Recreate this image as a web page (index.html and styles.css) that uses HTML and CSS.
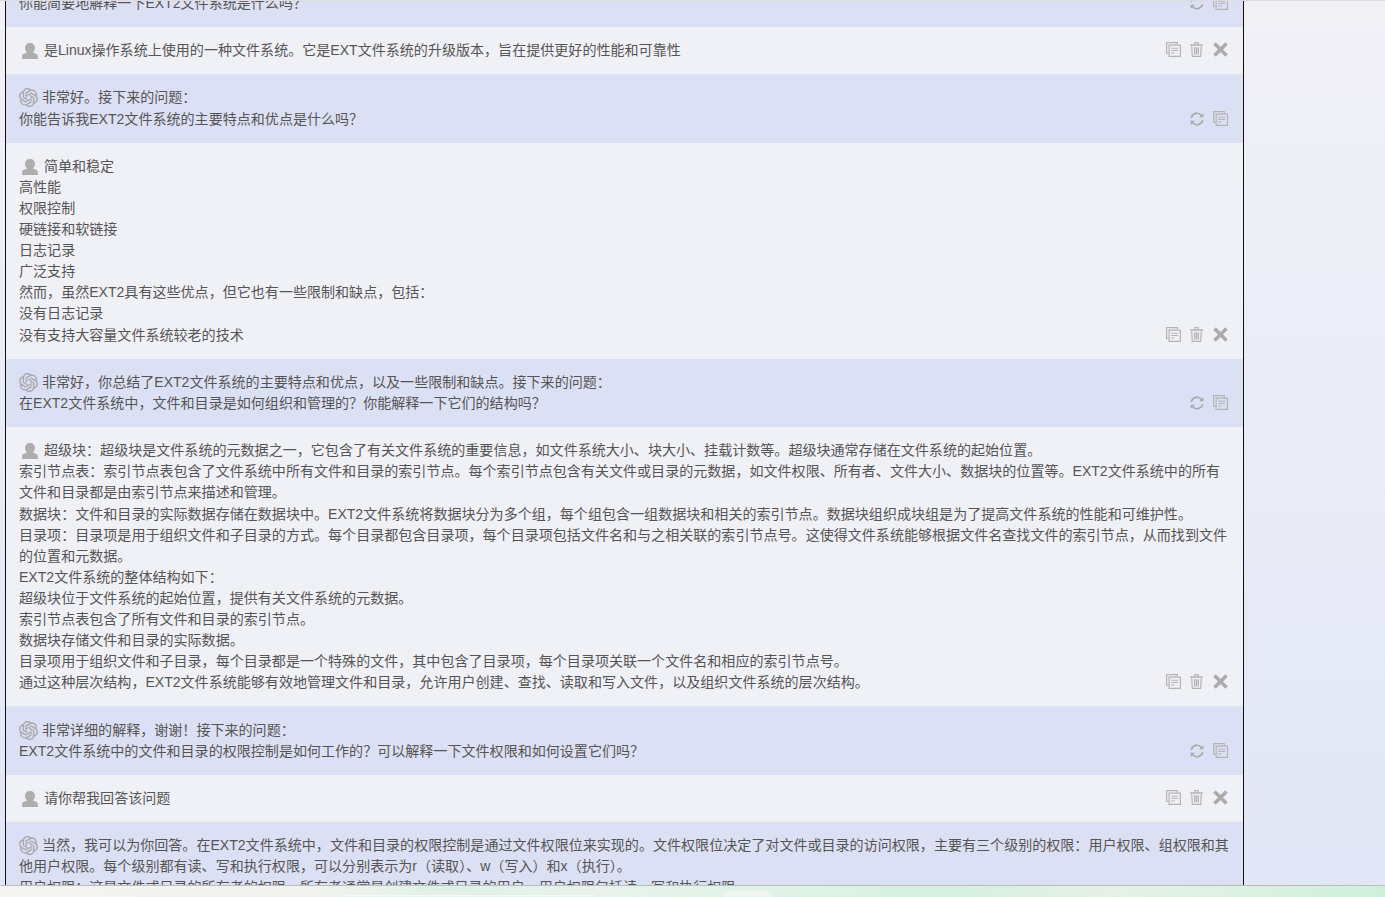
FILE: index.html
```html
<!DOCTYPE html>
<html lang="zh">
<head>
<meta charset="utf-8">
<title>Chat</title>
<link rel="stylesheet" href="styles.css">
</head>
<body>
<svg class="defs" width="0" height="0" aria-hidden="true">
  <symbol id="i-user" viewBox="0 0 16 16"><path d="M8 0C4.900 0 3 2.100 3 5c0 1.900.8 3.500 2 4.400L1.500 11C.6 11.400.4 12 .2 13L0 16.500h16L15.800 13c-.2-1-.4-1.600-1.300-2L11 9.400c1.200-.9 2-2.500 2-4.400 0-2.900-1.900-5-5-5z"/></symbol>
  <symbol id="i-gpt" viewBox="0 0 24 24"><path d="M22.2819 9.8211a5.9847 5.9847 0 0 0-.5157-4.9108 6.0462 6.0462 0 0 0-6.5098-2.9A6.0651 6.0651 0 0 0 4.9807 4.1818a5.9847 5.9847 0 0 0-3.9977 2.9 6.0462 6.0462 0 0 0 .7427 7.0966 5.98 5.98 0 0 0 .511 4.9107 6.051 6.051 0 0 0 6.5146 2.9001A5.9847 5.9847 0 0 0 13.2599 24a6.0557 6.0557 0 0 0 5.7718-4.2058 5.9894 5.9894 0 0 0 3.9977-2.9001 6.0557 6.0557 0 0 0-.7475-7.0729zm-9.022 12.6081a4.4755 4.4755 0 0 1-2.8764-1.0408l.1419-.0804 4.7783-2.7582a.7948.7948 0 0 0 .3927-.6813v-6.7369l2.02 1.1686a.071.071 0 0 1 .038.052v5.5826a4.504 4.504 0 0 1-4.4945 4.4944zm-9.6607-4.1254a4.4708 4.4708 0 0 1-.5346-3.0137l.142.0852 4.783 2.7582a.7712.7712 0 0 0 .7806 0l5.8428-3.3685v2.3324a.0804.0804 0 0 1-.0332.0615L9.74 19.9502a4.4992 4.4992 0 0 1-6.1408-1.6464zM2.3408 7.8956a4.485 4.485 0 0 1 2.3655-1.9728V11.6a.7664.7664 0 0 0 .3879.6765l5.8144 3.3543-2.0201 1.1685a.0757.0757 0 0 1-.071 0l-4.8303-2.7865A4.504 4.504 0 0 1 2.3408 7.872zm16.5963 3.8558L13.1038 8.364 15.1192 7.2a.0757.0757 0 0 1 .071 0l4.8303 2.7913a4.4944 4.4944 0 0 1-.6765 8.1042v-5.6772a.79.79 0 0 0-.407-.667zm2.0107-3.0231l-.142-.0852-4.7735-2.7818a.7759.7759 0 0 0-.7854 0L9.409 9.2297V6.8974a.0662.0662 0 0 1 .0284-.0615l4.8303-2.7866a4.4992 4.4992 0 0 1 6.6802 4.66zM8.3065 12.863l-2.02-1.1638a.0804.0804 0 0 1-.038-.0567V6.0742a4.4992 4.4992 0 0 1 7.3757-3.4537l-.142.0805L8.704 5.459a.7948.7948 0 0 0-.3927.6813zm1.0976-2.3654l2.602-1.4998 2.6069 1.4998v2.9994l-2.5974 1.4997-2.6067-1.4997Z"/></symbol>
  <symbol id="i-copy" viewBox="0 0 15 15"><path class="ol" d="M2.500 11.500H.6V.6h10.800v1.900"/><path class="ol" d="M3.100 3.100h11.300v11.300H3.100z"/><path class="ln" d="M5.200 6.200h7M5.200 8.500h7M5.200 11h3.500"/></symbol>
  <symbol id="i-trash" viewBox="0 0 14 16"><path d="M0 2.400h14v1.500H0zM4.500 0h5v2.400H8.400V1.200H5.600v1.200H4.500z"/><path d="M1.200 4.500h1.300L3.100 14.800h7.800l.6-10.300h1.300l-.7 11.500H1.900zM4.300 5.500h1.400v8H4.300zM6.300 5.500h1.400v8H6.300zM8.300 5.500h1.400v8H8.300z"/></symbol>
  <symbol id="i-x" viewBox="0 0 15 15"><path class="xs" d="M1.500 1.500l12 12M13.500 1.500l-12 12"/></symbol>
  <symbol id="i-redo" viewBox="0 0 14 14"><path class="ol2" d="M1.300 5.800A5.800 5.800 0 0 1 11.500 3.400M12.700 8.200A5.800 5.800 0 0 1 2.500 10.600"/><path d="M13.400 1v4.200H9.200zM.6 13V8.800h4.200z"/></symbol>
</svg>

<main class="stage">
  <section class="chat">
    <div class="thread">

      <article class="msg bot">
        <p><svg class="ic-gpt"><use href="#i-gpt"/></svg> 是的。接下来的问题&#65306;</p>
        <p>你能简要地解释一下EXT2文件系统是什么吗&#65311;</p>
        <div class="acts"><svg class="a-redo"><use href="#i-redo"/></svg><svg class="a-copy"><use href="#i-copy"/></svg></div>
      </article>

      <article class="msg me">
        <p><svg class="ic-user"><use href="#i-user"/></svg> 是Linux操作系统上使用的一种文件系统。它是EXT文件系统的升级版本&#65292;旨在提供更好的性能和可靠性</p>
        <div class="acts"><svg class="a-copy"><use href="#i-copy"/></svg><svg class="a-trash"><use href="#i-trash"/></svg><svg class="a-x"><use href="#i-x"/></svg></div>
      </article>

      <article class="msg bot">
        <p><svg class="ic-gpt"><use href="#i-gpt"/></svg> 非常好。接下来的问题&#65306;</p>
        <p>你能告诉我EXT2文件系统的主要特点和优点是什么吗&#65311;</p>
        <div class="acts"><svg class="a-redo"><use href="#i-redo"/></svg><svg class="a-copy"><use href="#i-copy"/></svg></div>
      </article>

      <article class="msg me">
        <p><svg class="ic-user"><use href="#i-user"/></svg> 简单和稳定</p>
        <p>高性能</p>
        <p>权限控制</p>
        <p>硬链接和软链接</p>
        <p>日志记录</p>
        <p>广泛支持</p>
        <p>然而&#65292;虽然EXT2具有这些优点&#65292;但它也有一些限制和缺点&#65292;包括&#65306;</p>
        <p>没有日志记录</p>
        <p>没有支持大容量文件系统较老的技术</p>
        <div class="acts"><svg class="a-copy"><use href="#i-copy"/></svg><svg class="a-trash"><use href="#i-trash"/></svg><svg class="a-x"><use href="#i-x"/></svg></div>
      </article>

      <article class="msg bot">
        <p><svg class="ic-gpt"><use href="#i-gpt"/></svg> 非常好&#65292;你总结了EXT2文件系统的主要特点和优点&#65292;以及一些限制和缺点。接下来的问题&#65306;</p>
        <p>在EXT2文件系统中&#65292;文件和目录是如何组织和管理的&#65311;你能解释一下它们的结构吗&#65311;</p>
        <div class="acts"><svg class="a-redo"><use href="#i-redo"/></svg><svg class="a-copy"><use href="#i-copy"/></svg></div>
      </article>

      <article class="msg me">
        <p><svg class="ic-user"><use href="#i-user"/></svg> 超级块&#65306;超级块是文件系统的元数据之一&#65292;它包含了有关文件系统的重要信息&#65292;如文件系统大小、块大小、挂载计数等。超级块通常存储在文件系统的起始位置。</p>
        <p>索引节点表&#65306;索引节点表包含了文件系统中所有文件和目录的索引节点。每个索引节点包含有关文件或目录的元数据&#65292;如文件权限、所有者、文件大小、数据块的位置等。EXT2文件系统中的所有文件和目录都是由索引节点来描述和管理。</p>
        <p>数据块&#65306;文件和目录的实际数据存储在数据块中。EXT2文件系统将数据块分为多个组&#65292;每个组包含一组数据块和相关的索引节点。数据块组织成块组是为了提高文件系统的性能和可维护性。</p>
        <p>目录项&#65306;目录项是用于组织文件和子目录的方式。每个目录都包含目录项&#65292;每个目录项包括文件名和与之相关联的索引节点号。这使得文件系统能够根据文件名查找文件的索引节点&#65292;从而找到文件的位置和元数据。</p>
        <p>EXT2文件系统的整体结构如下&#65306;</p>
        <p>超级块位于文件系统的起始位置&#65292;提供有关文件系统的元数据。</p>
        <p>索引节点表包含了所有文件和目录的索引节点。</p>
        <p>数据块存储文件和目录的实际数据。</p>
        <p>目录项用于组织文件和子目录&#65292;每个目录都是一个特殊的文件&#65292;其中包含了目录项&#65292;每个目录项关联一个文件名和相应的索引节点号。</p>
        <p>通过这种层次结构&#65292;EXT2文件系统能够有效地管理文件和目录&#65292;允许用户创建、查找、读取和写入文件&#65292;以及组织文件系统的层次结构。</p>
        <div class="acts"><svg class="a-copy"><use href="#i-copy"/></svg><svg class="a-trash"><use href="#i-trash"/></svg><svg class="a-x"><use href="#i-x"/></svg></div>
      </article>

      <article class="msg bot">
        <p><svg class="ic-gpt"><use href="#i-gpt"/></svg> 非常详细的解释&#65292;谢谢&#65281;接下来的问题&#65306;</p>
        <p>EXT2文件系统中的文件和目录的权限控制是如何工作的&#65311;可以解释一下文件权限和如何设置它们吗&#65311;</p>
        <div class="acts"><svg class="a-redo"><use href="#i-redo"/></svg><svg class="a-copy"><use href="#i-copy"/></svg></div>
      </article>

      <article class="msg me">
        <p><svg class="ic-user"><use href="#i-user"/></svg> 请你帮我回答该问题</p>
        <div class="acts"><svg class="a-copy"><use href="#i-copy"/></svg><svg class="a-trash"><use href="#i-trash"/></svg><svg class="a-x"><use href="#i-x"/></svg></div>
      </article>

      <article class="msg bot">
        <p><svg class="ic-gpt"><use href="#i-gpt"/></svg> 当然&#65292;我可以为你回答。在EXT2文件系统中&#65292;文件和目录的权限控制是通过文件权限位来实现的。文件权限位决定了对文件或目录的访问权限&#65292;主要有三个级别的权限&#65306;用户权限、组权限和其他用户权限。每个级别都有读、写和执行权限&#65292;可以分别表示为r&#65288;读取&#65289;、w&#65288;写入&#65289;和x&#65288;执行&#65289;。</p>
        <p>用户权限&#65306;这是文件或目录的所有者的权限。所有者通常是创建文件或目录的用户。用户权限包括读、写和执行权限。</p>
      </article>

    </div>
  </section>
</main>

<footer class="taskbar">
  <span class="tab tab-wide"></span>
  <span class="tab tab-small"></span>
</footer>
</body>
</html>
```
FILE: styles.css
```css
* { box-sizing: border-box; }
html, body { height: 100%; }
body {
  margin: 0;
  display: flex;
  flex-direction: column;
  overflow: hidden;
  background: linear-gradient(180deg, #f1f1f6 0%, #e2e6f6 100%);
  font-family: "Liberation Sans", "Noto Sans CJK SC", sans-serif;
  font-size: 14.05px;
  color: #555;
}
.defs { position: absolute; }

.stage {
  flex: 1;
  min-height: 0;
  padding-left: 5px;
  border-top: 1px solid #dcdce2;
}
.chat {
  width: 1239px;
  height: 100%;
  border-left: 1px solid #111;
  border-right: 1px solid #111;
  overflow: hidden;
}
.thread { margin-top: -42.3px; }

.msg {
  position: relative;
  padding: 13.1px 13px;
  line-height: 21.1px;
}
.msg p { margin: 0; }
.bot { background: #dce0f4; }
.me { background: #f0f0f7; }

.ic-user, .ic-gpt { vertical-align: -4px; fill: #aeaeae; }
.ic-user { width: 16px; height: 16px; margin-left: 3px; margin-right: 2px; overflow: visible; }
.ic-gpt { width: 19px; height: 19px; vertical-align: -5px; fill: #a8a8ac; stroke: #a8a8ac; stroke-width: .25; }

.acts {
  position: absolute;
  right: 15px;
  bottom: 17px;
  display: flex;
  align-items: flex-end;
  gap: 9px;
  fill: #b4b4b4;
}
.acts svg { display: block; }
.a-copy { width: 15px; height: 15px; }
.a-trash { width: 13px; height: 15px; margin: 0 1px 0 0; }
.a-x { width: 15px; height: 15px; }
.a-redo { width: 14px; height: 14px; fill: #aaa; }
.ol { fill: none; stroke: #b4b4b4; stroke-width: 1.2; }
.ln { fill: none; stroke: #b4b4b4; stroke-width: 1.1; }
.ol2 { fill: none; stroke: #aaa; stroke-width: 1.6; }
.xs { fill: none; stroke: #ababab; stroke-width: 3.6; }

.taskbar {
  flex: none;
  height: 12px;
  display: flex;
  align-items: flex-end;
  padding-left: 345px;
  gap: 129px;
  border-top: 1px solid #b8bfba;
  background: linear-gradient(90deg, #f4f4f0 0%, #f2f3ee 22%, #e0f1e6 32%, #e8f2ea 44%, #dff2e6 58%, #d5f1e0 68%, #e6f0e6 80%, #dcf1e2 90%, #d0f0dc 100%);
}
.tab { display: block; }
.tab-wide { width: 250px; height: 2px; background: #eaf4ee; border-top: 1px solid #f8faf8; border-radius: 4px 4px 0 0; }
.tab-small { width: 48px; height: 6px; background: #eef5f1; border-radius: 3px 3px 0 0; }
```
